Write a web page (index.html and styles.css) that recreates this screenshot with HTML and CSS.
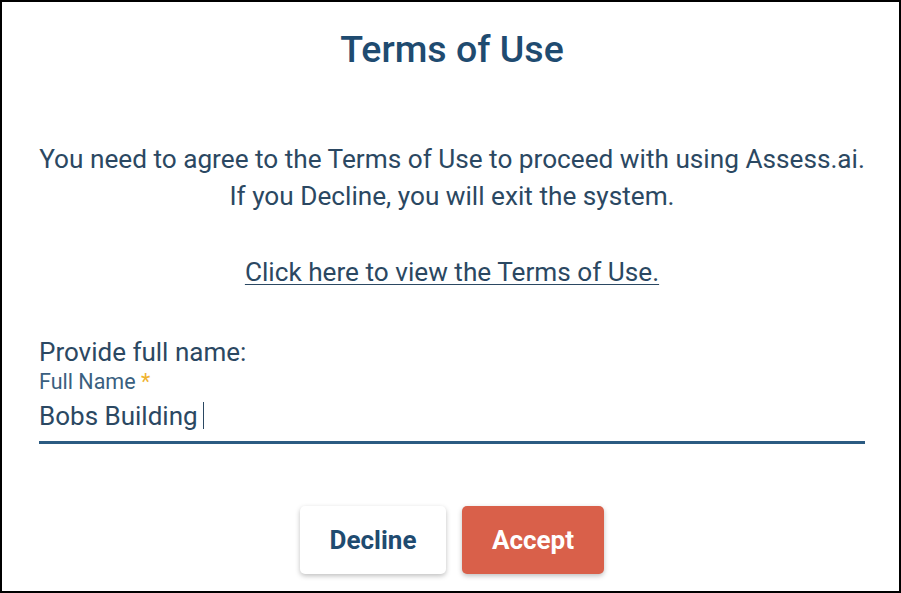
FILE: index.html
```html
<!DOCTYPE html>
<html>
<head>
<meta charset="utf-8">
<link rel="stylesheet" href="styles.css">
</head>
<body>
<div class="frame">
  <h1 class="title">Terms of Use</h1>
  <p class="intro">You need to agree to the Terms of Use to proceed with using Assess.ai.<br>If you Decline, you will exit the system.</p>
  <p class="link-row"><a class="terms-link" href="#">Click here to view the Terms of Use.</a></p>
  <div class="name-block">
    <div class="prompt">Provide full name:</div>
    <label class="field-label">Full Name <span class="req">*</span></label>
    <div class="field-input"><span class="value">Bobs Building</span><span class="caret"></span></div>
  </div>
  <div class="actions">
    <button class="btn btn-decline">Decline</button>
    <button class="btn btn-accept">Accept</button>
  </div>
</div>
</body>
</html>
```
FILE: styles.css
```css
html, body {
  margin: 0;
  padding: 0;
  background: #fff;
}
body {
  font-family: Roboto, "Liberation Sans", sans-serif;
  color: #2b4862;
}
.frame {
  box-sizing: border-box;
  width: 901px;
  height: 593px;
  border: 2px solid #000;
  padding: 0 34px 0 37px;
  display: flex;
  flex-direction: column;
}
.title {
  margin: 27px 0 0;
  text-align: center;
  font-size: 37.5px;
  font-weight: 500;
  line-height: 40px;
  color: #1f4b70;
}
.intro {
  margin: 72px 0 0;
  text-align: center;
  font-size: 26.2px;
  line-height: 37px;
}
.link-row {
  margin: 42px 0 0;
  text-align: center;
  font-size: 26.2px;
  line-height: 30px;
}
.terms-link {
  color: #2b4862;
  text-decoration: underline;
  text-underline-offset: 3px;
  text-decoration-thickness: 1px;
}
.name-block {
  margin-top: 50px;
  display: flex;
  flex-direction: column;
}
.prompt {
  font-size: 26px;
  line-height: 30px;
}
.field-label {
  font-size: 21.5px;
  line-height: 24px;
  color: #3a5f80;
  margin-top: 3px;
}
.req {
  color: #f0b32e;
}
.field-input {
  box-sizing: border-box;
  display: flex;
  align-items: center;
  height: 48px;
  padding-bottom: 6px;
  margin-top: 2px;
  border-bottom: 3px solid #2b5b82;
  font-size: 26px;
}
.caret {
  display: inline-block;
  width: 1px;
  height: 27px;
  background: #2b4862;
  margin-left: 5px;
}
.actions {
  margin-top: 62px;
  display: flex;
  justify-content: center;
  gap: 16px;
}
.btn {
  font-family: Roboto, "Liberation Sans", sans-serif;
  font-size: 26px;
  font-weight: 700;
  height: 68px;
  border: none;
  border-radius: 5px;
  box-shadow: 0 2px 5px rgba(0,0,0,0.25);
  cursor: pointer;
}
.btn-decline {
  width: 146px;
  background: #fff;
  color: #1f4b70;
}
.btn-accept {
  width: 142px;
  background: #d9604a;
  color: #fff;
}
```
